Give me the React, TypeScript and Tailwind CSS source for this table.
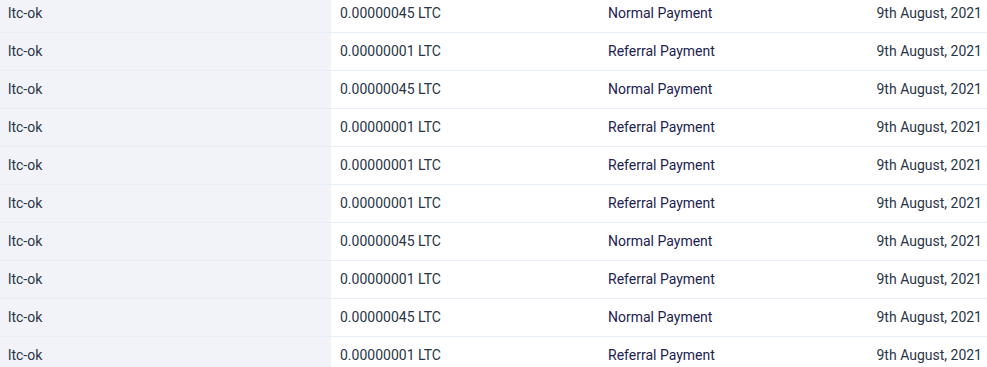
const rows = [
  { amount: "0.00000045 LTC", type: "Normal Payment" },
  { amount: "0.00000001 LTC", type: "Referral Payment" },
  { amount: "0.00000045 LTC", type: "Normal Payment" },
  { amount: "0.00000001 LTC", type: "Referral Payment" },
  { amount: "0.00000001 LTC", type: "Referral Payment" },
  { amount: "0.00000001 LTC", type: "Referral Payment" },
  { amount: "0.00000045 LTC", type: "Normal Payment" },
  { amount: "0.00000001 LTC", type: "Referral Payment" },
  { amount: "0.00000045 LTC", type: "Normal Payment" },
  { amount: "0.00000001 LTC", type: "Referral Payment" },
]

export default function App() {
  return (
    <div className="w-[987px] h-[367px] overflow-hidden bg-white font-['Roboto',sans-serif] text-[14px]">
      <div className="-mt-[5px]">
        {rows.map((row, i) => (
          <div
            key={i}
            className="flex h-[38px] items-center border-b border-[#e7eef8]"
          >
            <div className="w-[331px] h-full flex items-center pl-[8px] bg-[#f1f3f8] text-[#2a3547]">
              ltc-ok
            </div>
            <div className="w-[268px] pl-[9px] text-[#2a3547]">{row.amount}</div>
            <div className="flex-1 pl-[9px] text-[#1c2250]">{row.type}</div>
            <div className="pr-[5px] text-[#2a3547]">9th August, 2021</div>
          </div>
        ))}
      </div>
    </div>
  )
}
